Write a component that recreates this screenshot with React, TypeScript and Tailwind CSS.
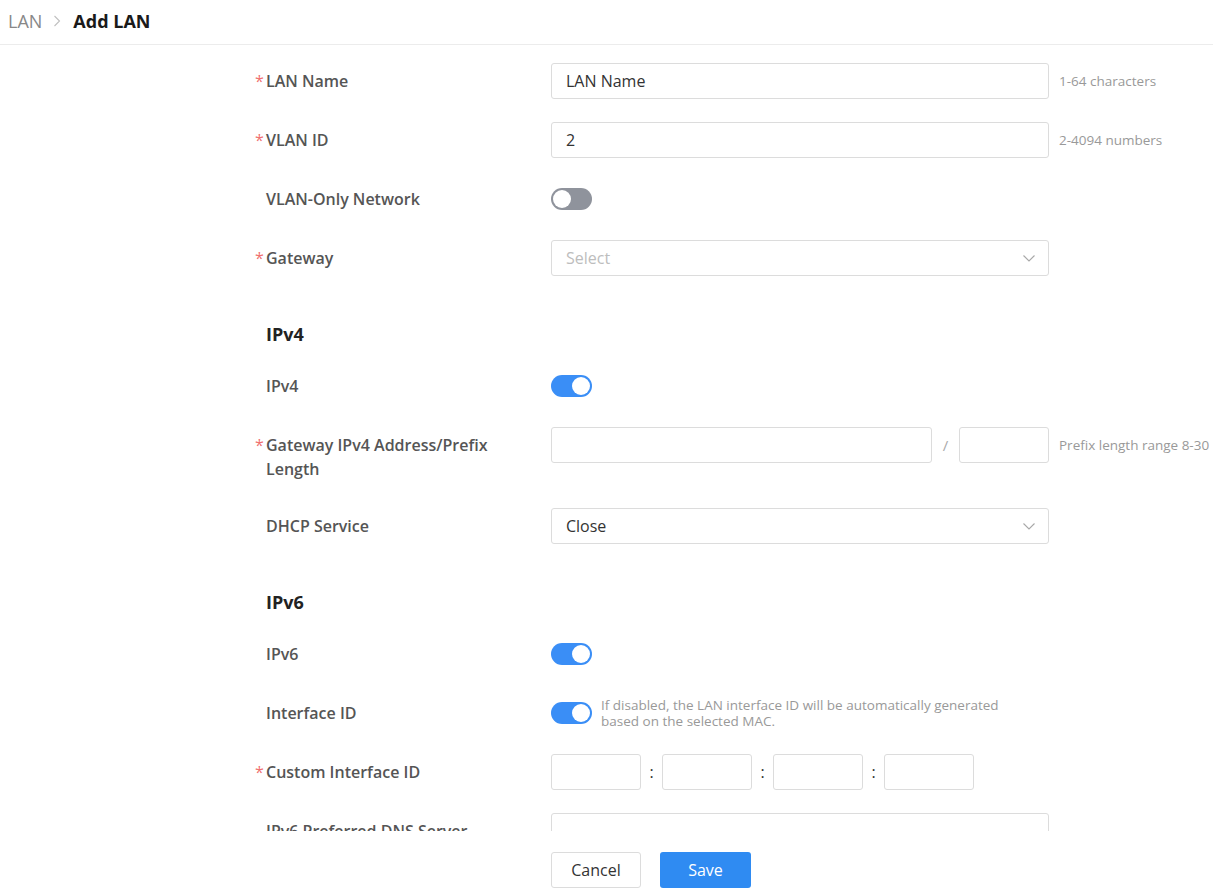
import React from "react";

const font = { fontFamily: '"Open Sans", "Noto Sans", sans-serif' };

const Label = ({ text, required }: { text: string; required?: boolean }) => (
	<div className="flex w-[296px] shrink-0 items-start pt-[6px]">
		<span className="w-[11px] shrink-0 text-[16px] leading-[24px] text-[#f07070]">
			{required ? "*" : ""}
		</span>
		<span className="w-[250px] text-[16px] font-semibold leading-[24px] text-[#555]">{text}</span>
	</div>
);

const Input = ({ value, className = "w-[498px]" }: { value?: string; className?: string }) => (
	<div
		className={`flex h-[36px] shrink-0 items-center rounded-[3px] border border-[#dcdcdc] bg-white px-[14px] text-[16px] text-[#333] ${className}`}
	>
		{value}
	</div>
);

const Chevron = () => (
	<svg width="14" height="14" viewBox="0 0 14 14" fill="none" stroke="#a8a8a8" strokeWidth="1.1">
		<path d="M1.5 4.5 7 10l5.5-5.5" />
	</svg>
);

const Select = ({ value, placeholder }: { value?: string; placeholder?: string }) => (
	<div className="flex h-[36px] w-[498px] items-center justify-between rounded-[3px] border border-[#dcdcdc] bg-white pl-[14px] pr-[12px] text-[16px]">
		{value ? <span className="text-[#333]">{value}</span> : <span className="text-[#bdbdbd]">{placeholder}</span>}
		<Chevron />
	</div>
);

const Toggle = ({ on }: { on?: boolean }) => (
	<div
		className={`flex h-[22px] w-[41px] shrink-0 items-center rounded-full px-[2px] ${
			on ? "justify-end bg-[#3a8ef6]" : "justify-start bg-[#8f939c]"
		}`}
	>
		<div className="h-[18px] w-[18px] rounded-full bg-white" />
	</div>
);

const Hint = ({ children }: { children: React.ReactNode }) => (
	<span className="ml-[10px] whitespace-nowrap text-[13.5px] text-[#999]">{children}</span>
);

const Row = ({
	label,
	required,
	children,
	className = "mb-[23px]",
}: {
	label: string;
	required?: boolean;
	children: React.ReactNode;
	className?: string;
}) => (
	<div className={`flex items-start ${className}`}>
		<Label text={label} required={required} />
		<div className="flex min-h-[36px] items-center">{children}</div>
	</div>
);

const Heading = ({ children }: { children: React.ReactNode }) => (
	<div className="pb-[22px] pl-[11px] pt-[23px] text-[18px] font-bold leading-[24px] text-[#222]">{children}</div>
);

const Colon = () => <span className="w-[21px] text-center text-[16px] text-[#333]">:</span>;

export default function App() {
	return (
		<div className="flex h-[891px] flex-col bg-white" style={font}>
			<div className="flex h-[45px] shrink-0 items-center border-b border-[#ececec] px-[8px] pb-[2px] text-[18px]">
				<span className="text-[#888]">LAN</span>
				<svg className="mx-[9px]" width="12" height="14" viewBox="0 0 12 14" fill="none" stroke="#c0c0c0" strokeWidth="1.1">
					<path d="M3.5 2 8.5 7l-5 5" />
				</svg>
				<span className="ml-[1px] font-bold text-[#1a1a1a]">Add LAN</span>
			</div>

			<div className="flex-1 overflow-hidden">
				<div className="ml-[255px] pt-[18px]">
					<Row label="LAN Name" required>
						<Input value="LAN Name" />
						<Hint>1-64 characters</Hint>
					</Row>
					<Row label="VLAN ID" required>
						<Input value="2" />
						<Hint>2-4094 numbers</Hint>
					</Row>
					<Row label="VLAN-Only Network">
						<Toggle />
					</Row>
					<Row label="Gateway" required>
						<Select placeholder="Select" />
					</Row>

					<Heading>IPv4</Heading>
					<Row label="IPv4">
						<Toggle on />
					</Row>
					<Row label="Gateway IPv4 Address/Prefix Length" required className="mb-[27px]">
						<Input className="w-[381px]" />
						<span className="w-[27px] text-center text-[15px] text-[#aaa]">/</span>
						<Input className="w-[90px]" />
						<Hint>Prefix length range 8-30</Hint>
					</Row>
					<Row label="DHCP Service">
						<Select value="Close" />
					</Row>

					<Heading>IPv6</Heading>
					<Row label="IPv6">
						<Toggle on />
					</Row>
					<Row label="Interface ID">
						<Toggle on />
						<p className="ml-[9px] w-[420px] text-[13.5px] leading-[16px] text-[#999]">
							If disabled, the LAN interface ID will be automatically generated based on the selected MAC.
						</p>
					</Row>
					<Row label="Custom Interface ID" required>
						<Input className="w-[90px]" />
						<Colon />
						<Input className="w-[90px]" />
						<Colon />
						<Input className="w-[90px]" />
						<Colon />
						<Input className="w-[90px]" />
					</Row>
					<Row label="IPv6 Preferred DNS Server">
						<Input />
					</Row>
				</div>
			</div>

			<div className="flex h-[60px] shrink-0 gap-[19px] pl-[551px] pt-[21px]">
				<button className="h-[36px] w-[90px] rounded-[3px] border border-[#dcdcdc] bg-white text-[16px] text-[#333]">
					Cancel
				</button>
				<button className="h-[36px] w-[91px] rounded-[3px] bg-[#2f8bf2] text-[16px] text-white">Save</button>
			</div>
		</div>
	);
}
